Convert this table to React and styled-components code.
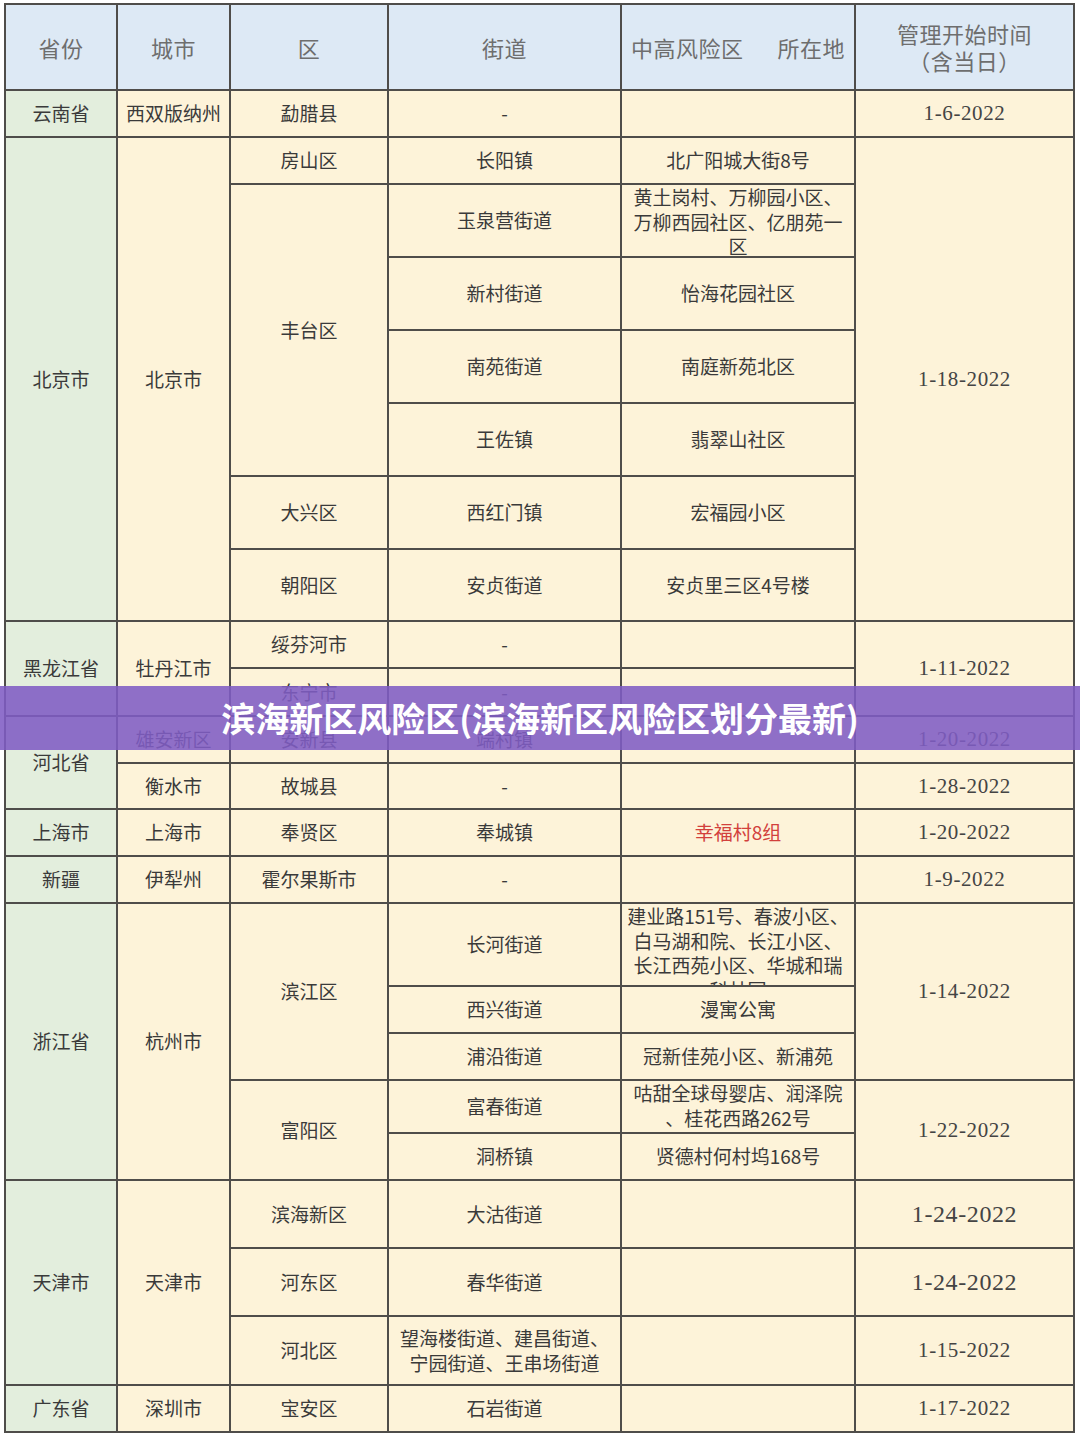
import styled, { createGlobalStyle } from 'styled-components';

const GlobalStyle = createGlobalStyle`
  html, body {
    margin: 0;
    padding: 0;
    background: #fff;
  }
`

const Page = styled.div`
  position: relative;
  width: 1080px;
  height: 1437px;
  padding: 3px 0 0 4px;
  box-sizing: border-box;
  background: #fff;
  overflow: hidden;
`

const Sheet = styled.div`
  display: grid;
  grid-template-columns: 110px 111px 156px 231px 232px 217px;
  grid-template-rows: 84px 45px 45px 71px 71px 71px 71px 71px 70px 45px 46px 45px 44px 45px 45px 81px 45px 45px 51px 45px 66px 66px 67px 45px;
  gap: 2px;
  padding: 2px;
  width: max-content;
  background: #4f4d4a;
`

const Cell = styled.div`
  grid-column: ${p => p.$col};
  grid-row: ${p => p.$row} / span ${p => p.$span || 1};
  display: flex;
  align-items: ${p => (p.$top ? 'flex-start' : 'center')};
  justify-content: center;
  padding: 0 4px;
  overflow: hidden;
  background: #fdf3d9;
  color: ${p => (p.$red ? '#d2403c' : '#3a3a3a')};
  font: 400 19px/24.5px "Noto Sans CJK SC", sans-serif;
  text-align: center;
  line-break: anywhere;
`

const ProvinceCell = styled(Cell)`
  background: #e3eedd;
`

const DateCell = styled(Cell)`
  font-family: "Liberation Serif", "Noto Sans CJK SC", serif;
  font-size: ${p => (p.$big ? '24px' : '21px')};
  letter-spacing: 0.6px;
  color: #444;
`

const HeadCell = styled.div`
  grid-row: 1;
  display: flex;
  flex-direction: column;
  align-items: center;
  justify-content: center;
  background: #dde9f5;
  color: #6e6e6e;
  font: 400 22px/27px "Noto Sans CJK SC", serif;
  letter-spacing: 0.5px;
`

const HeadSplit = styled(HeadCell)`
  flex-direction: row;
  justify-content: space-between;
  padding: 0 9px;
`

const Banner = styled.div`
  position: absolute;
  top: 686px;
  left: 0;
  right: 0;
  height: 64px;
  display: flex;
  align-items: center;
  justify-content: center;
  background: rgba(128, 92, 196, 0.88);
`

const BannerText = styled.div`
  color: #fff;
  font: 700 34px/1 "Noto Sans CJK SC", sans-serif;
`

// [row, span, text]
const provinces = [
  [2, 1, '云南省'],
  [3, 7, '北京市'],
  [10, 2, '黑龙江省'],
  [12, 2, '河北省'],
  [14, 1, '上海市'],
  [15, 1, '新疆'],
  [16, 5, '浙江省'],
  [21, 3, '天津市'],
  [24, 1, '广东省'],
]

// [col, row, span, text, opts]
const cells = [
  // cities
  [2, 2, 1, '西双版纳州'],
  [2, 3, 7, '北京市'],
  [2, 10, 2, '牡丹江市'],
  [2, 12, 1, '雄安新区'],
  [2, 13, 1, '衡水市'],
  [2, 14, 1, '上海市'],
  [2, 15, 1, '伊犁州'],
  [2, 16, 5, '杭州市'],
  [2, 21, 3, '天津市'],
  [2, 24, 1, '深圳市'],
  // districts
  [3, 2, 1, '勐腊县'],
  [3, 3, 1, '房山区'],
  [3, 4, 4, '丰台区'],
  [3, 8, 1, '大兴区'],
  [3, 9, 1, '朝阳区'],
  [3, 10, 1, '绥芬河市'],
  [3, 11, 1, '东宁市'],
  [3, 12, 1, '安新县'],
  [3, 13, 1, '故城县'],
  [3, 14, 1, '奉贤区'],
  [3, 15, 1, '霍尔果斯市'],
  [3, 16, 3, '滨江区'],
  [3, 19, 2, '富阳区'],
  [3, 21, 1, '滨海新区'],
  [3, 22, 1, '河东区'],
  [3, 23, 1, '河北区'],
  [3, 24, 1, '宝安区'],
  // streets
  [4, 2, 1, '-'],
  [4, 3, 1, '长阳镇'],
  [4, 4, 1, '玉泉营街道'],
  [4, 5, 1, '新村街道'],
  [4, 6, 1, '南苑街道'],
  [4, 7, 1, '王佐镇'],
  [4, 8, 1, '西红门镇'],
  [4, 9, 1, '安贞街道'],
  [4, 10, 1, '-'],
  [4, 11, 1, '-'],
  [4, 12, 1, '端村镇'],
  [4, 13, 1, '-'],
  [4, 14, 1, '奉城镇'],
  [4, 15, 1, '-'],
  [4, 16, 1, '长河街道'],
  [4, 17, 1, '西兴街道'],
  [4, 18, 1, '浦沿街道'],
  [4, 19, 1, '富春街道'],
  [4, 20, 1, '洞桥镇'],
  [4, 21, 1, '大沽街道'],
  [4, 22, 1, '春华街道'],
  [4, 23, 1, '望海楼街道、建昌街道、宁园街道、王串场街道'],
  [4, 24, 1, '石岩街道'],
  // risk locations
  [5, 2, 1, ''],
  [5, 3, 1, '北广阳城大街8号'],
  [5, 4, 1, '黄土岗村、万柳园小区、万柳西园社区、亿朋苑一区', { top: true }],
  [5, 5, 1, '怡海花园社区'],
  [5, 6, 1, '南庭新苑北区'],
  [5, 7, 1, '翡翠山社区'],
  [5, 8, 1, '宏福园小区'],
  [5, 9, 1, '安贞里三区4号楼'],
  [5, 10, 1, ''],
  [5, 11, 1, ''],
  [5, 12, 1, ''],
  [5, 13, 1, ''],
  [5, 14, 1, '幸福村8组', { red: true }],
  [5, 15, 1, ''],
  [5, 16, 1, '建业路151号、春波小区、白马湖和院、长江小区、长江西苑小区、华城和瑞科林园', { top: true }],
  [5, 17, 1, '漫寓公寓'],
  [5, 18, 1, '冠新佳苑小区、新浦苑'],
  [5, 19, 1, '咕甜全球母婴店、润泽院、桂花西路262号', { top: true }],
  [5, 20, 1, '贤德村何村坞168号'],
  [5, 21, 1, ''],
  [5, 22, 1, ''],
  [5, 23, 1, ''],
  [5, 24, 1, ''],
]

// [row, span, text, big]
const dates = [
  [2, 1, '1-6-2022'],
  [3, 7, '1-18-2022'],
  [10, 2, '1-11-2022'],
  [12, 1, '1-20-2022'],
  [13, 1, '1-28-2022'],
  [14, 1, '1-20-2022'],
  [15, 1, '1-9-2022'],
  [16, 3, '1-14-2022'],
  [19, 2, '1-22-2022'],
  [21, 1, '1-24-2022', true],
  [22, 1, '1-24-2022', true],
  [23, 1, '1-15-2022'],
  [24, 1, '1-17-2022'],
]

function App() {
  return (
    <Page>
      <GlobalStyle />
      <Sheet>
        <HeadCell>省份</HeadCell>
        <HeadCell>城市</HeadCell>
        <HeadCell>区</HeadCell>
        <HeadCell>街道</HeadCell>
        <HeadSplit>
          <span>中高风险区</span>
          <span>所在地</span>
        </HeadSplit>
        <HeadCell>
          <span>管理开始时间</span>
          <span>（含当日）</span>
        </HeadCell>

        {provinces.map(([row, span, text]) => (
          <ProvinceCell key={`p${row}`} $col={1} $row={row} $span={span}>{text}</ProvinceCell>
        ))}

        {cells.map(([col, row, span, text, opts = {}]) => (
          <Cell key={`c${col}-${row}`} $col={col} $row={row} $span={span} $top={opts.top} $red={opts.red}>
            {text}
          </Cell>
        ))}

        {dates.map(([row, span, text, big]) => (
          <DateCell key={`d${row}`} $col={6} $row={row} $span={span} $big={big}>{text}</DateCell>
        ))}
      </Sheet>

      <Banner>
        <BannerText>滨海新区风险区(滨海新区风险区划分最新)</BannerText>
      </Banner>
    </Page>
  );
}

export default App;
